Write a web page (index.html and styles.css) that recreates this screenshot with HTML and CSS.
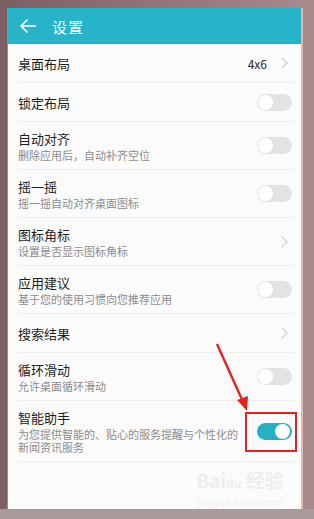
FILE: index.html
```html
<!DOCTYPE html>
<html lang="zh">
<head>
<meta charset="utf-8">
<link rel="stylesheet" href="styles.css">
</head>
<body>
<div class="frame">
  <div class="screen">
    <div class="header">
      <svg class="back" width="18" height="16" viewBox="0 0 18 16"><path d="M17 8H2M8.5 1.5L2 8l6.5 6.5" fill="none" stroke="#fff" stroke-width="1.6"/></svg>
      <span class="title">设置</span>
    </div>
    <div class="list">
      <div class="row single"><div class="txt"><div class="t">桌面布局</div></div><span class="val">4x6</span><span class="chev"></span></div>
      <div class="row single"><div class="txt"><div class="t">锁定布局</div></div><span class="sw"></span></div>
      <div class="row double"><div class="txt"><div class="t">自动对齐</div><div class="s">删除应用后，自动补齐空位</div></div><span class="sw"></span></div>
      <div class="row double"><div class="txt"><div class="t">摇一摇</div><div class="s">摇一摇自动对齐桌面图标</div></div><span class="sw"></span></div>
      <div class="row double"><div class="txt"><div class="t">图标角标</div><div class="s">设置是否显示图标角标</div></div><span class="chev"></span></div>
      <div class="row double"><div class="txt"><div class="t">应用建议</div><div class="s">基于您的使用习惯向您推荐应用</div></div><span class="sw"></span></div>
      <div class="row single"><div class="txt"><div class="t">搜索结果</div></div><span class="chev"></span></div>
      <div class="row double"><div class="txt"><div class="t">循环滑动</div><div class="s">允许桌面循环滑动</div></div><span class="sw"></span></div>
      <div class="row triple"><div class="txt"><div class="t">智能助手</div><div class="s">为您提供智能的、贴心的服务提醒与个性化的新闻资讯服务</div></div><span class="sw on"></span></div>
    </div>
    <div class="watermark"><span class="wm1">Bai<span class="paw">du</span> 经验</span><span class="wm2">jingyan.baidu.com</span></div>
    <svg class="arrow" width="40" height="72" viewBox="0 0 40 72"><path d="M4 2L31 62" stroke="#e8211f" stroke-width="2.4" fill="none"/><path d="M24 58L34 69L35 54Z" fill="#e8211f"/></svg>
    <div class="redbox"></div>
  </div>
</div>
</body>
</html>
```
FILE: styles.css
```css
html, body { margin: 0; padding: 0; }
body {
  width: 314px; height: 519px; overflow: hidden;
  background: #a99a9b;
  font-family: "Noto Sans CJK SC", "Noto Sans", sans-serif;
}
.frame {
  height: 509px;
  background: linear-gradient(90deg, #7c5f62 0, #8e7073 40%, #a88a8b 100%);
  padding: 8px 0 0 7px;
  box-sizing: border-box;
  display: flex;
}
.screen {
  position: relative;
  width: 296px; height: 501px;
  background: #fbfbfb;
  border-left: 1px solid #e06e6a;
  border-right: 2px solid #e9b5b3;
  box-sizing: border-box;
  display: flex; flex-direction: column;
}
.header {
  height: 36px; flex: none;
  background: #27b4c8;
  display: flex; align-items: center;
  padding-left: 11px;
}
.back { display: block; }
.title { color: #fff; font-size: 15px; margin-left: 15px; letter-spacing: 1px; }
.list { display: flex; flex-direction: column; }
.row {
  margin: 0 7px 0 10px;
  border-bottom: 1px solid #ececec;
  display: flex; align-items: center;
  padding-right: 2px;
  box-sizing: border-box;
}
.single { height: 39px; }
.double { height: 48px; }
.triple { height: 61px; }
.txt { flex: 1; min-width: 0; }
.t { font-size: 13px; color: #1e1e1e; line-height: 17px; }
.s { font-size: 11px; color: #8c8c8c; line-height: 13px; margin-top: 2px; }
.triple .s { padding-right: 10px; }
.val { font-size: 12px; color: #2a2a2a; margin-right: 11px; }
.chev {
  width: 7px; height: 7px; margin-right: 6px;
  border-top: 1px solid #c8c8c8; border-right: 1px solid #c8c8c8;
  transform: rotate(45deg);
}
.sw {
  flex: none;
  width: 35px; height: 17px; border-radius: 9px;
  background: #e3e3e3; position: relative;
}
.sw::after {
  content: ""; position: absolute; left: 1px; top: 1px;
  width: 15px; height: 15px; border-radius: 50%; background: #fff;
}
.sw.on { background: #27afc2; }
.sw.on::after { left: auto; right: 2px; }
.watermark {
  display: flex; flex-direction: column; align-items: center;
  margin: 6px 0 0 186px; width: 92px;
  color: rgba(205,205,205,0.3);
}
.wm1 { font-size: 19px; font-weight: bold; line-height: 24px; white-space: nowrap; }
.paw { font-size: 12px; }
.wm2 { font-size: 10px; line-height: 13px; white-space: nowrap; }
.arrow { position: absolute; left: 205px; top: 334px; }
.redbox {
  position: absolute; left: 237px; top: 404px;
  width: 52px; height: 40px;
  border: 2px solid #e8211f; box-sizing: border-box;
}
```
